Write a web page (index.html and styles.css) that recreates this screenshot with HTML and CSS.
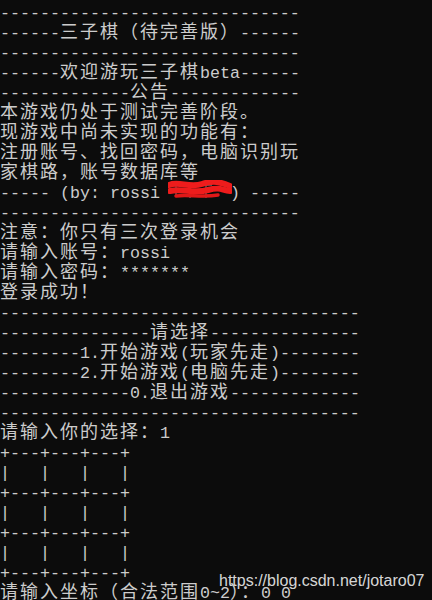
FILE: index.html
```html
<!DOCTYPE html>
<html lang="zh-CN">
<head>
<meta charset="utf-8">
<title>三子棋</title>
<link rel="stylesheet" href="styles.css">
</head>
<body>
<div class="console">
<div class="ln"><span class="h">------------------------------</span></div>
<div class="ln"><span class="h">------</span>三子棋（待完善版）<span class="h">------</span></div>
<div class="ln"><span class="h">------------------------------</span></div>
<div class="ln"><span class="h">------</span>欢迎游玩三子棋<span class="h">beta------</span></div>
<div class="ln"><span class="h">-------------</span>公告<span class="h">-------------</span></div>
<div class="ln">本游戏仍处于测试完善阶段。</div>
<div class="ln">现游戏中尚未实现的功能有：</div>
<div class="ln">注册账号、找回密码，电脑识别玩</div>
<div class="ln">家棋路，账号数据库等</div>
<div class="ln"><span class="h">----- (by: rossi </span><span class="redact"><svg width="64" height="20" viewBox="0 0 64 20"><path d="M4 4 L12 4 M8 2 L8 17 M16 6 L24 6 M22 3 L22 18 M32 5 L44 5 M38 3 L38 18 M48 8 L58 8" stroke="#6a6a6a" stroke-width="1.3" fill="none"/><path d="M1 5 C10 1, 22 8, 34 4 S52 2, 62 6" stroke="#ee1c1c" stroke-width="6" fill="none" stroke-linecap="round"/><path d="M2 11 C14 8, 26 14, 40 10 S54 11, 62 11" stroke="#ee1c1c" stroke-width="6" fill="none" stroke-linecap="round"/><path d="M8 16 C20 14, 34 18, 50 15" stroke="#e01818" stroke-width="3.5" fill="none" stroke-linecap="round"/></svg></span><span class="h">) -----</span></div>
<div class="ln"><span class="h">------------------------------</span></div>
<div class="ln">注意：你只有三次登录机会</div>
<div class="ln">请输入账号：<span class="h">rossi</span></div>
<div class="ln">请输入密码：<span class="h">*******</span></div>
<div class="ln">登录成功！</div>
<div class="ln"><span class="h">------------------------------------</span></div>
<div class="ln"><span class="h">---------------</span>请选择<span class="h">---------------</span></div>
<div class="ln"><span class="h">--------1.</span>开始游戏<span class="h">(</span>玩家先走<span class="h">)--------</span></div>
<div class="ln"><span class="h">--------2.</span>开始游戏<span class="h">(</span>电脑先走<span class="h">)--------</span></div>
<div class="ln"><span class="h">-------------0.</span>退出游戏<span class="h">-------------</span></div>
<div class="ln"><span class="h">------------------------------------</span></div>
<div class="ln">请输入你的选择：<span class="h">1</span></div>
<div class="ln"><span class="h">+---+---+---+</span></div>
<div class="ln"><span class="h">|   |   |   |</span></div>
<div class="ln"><span class="h">+---+---+---+</span></div>
<div class="ln"><span class="h">|   |   |   |</span></div>
<div class="ln"><span class="h">+---+---+---+</span></div>
<div class="ln"><span class="h">|   |   |   |</span></div>
<div class="ln"><span class="h">+---+---+---+</span></div>
<div class="ln">请输入坐标（合法范围<span class="h">0~2</span>）：<span class="h">0 0</span></div>
<span class="watermark">https://blog.csdn.net/jotaro07</span>
</div>
</body>
</html>
```

FILE: styles.css
```css
html, body {
  margin: 0;
  padding: 0;
  background: #0c0c0c;
}

.console {
  position: relative;
  height: 600px;
  overflow: hidden;
  font-family: "Noto Sans CJK SC", sans-serif;
  font-size: 18px;
  letter-spacing: 2px;
  line-height: 20px;
  color: #cccccc;
}

.ln {
  height: 20px;
  white-space: pre;
}

.h {
  font-family: "Liberation Mono", monospace;
  font-size: 16.667px;
  letter-spacing: 0;
  line-height: 20px;
}

.redact {
  display: inline-block;
  width: 60px;
  height: 20px;
  vertical-align: top;
}

.redact svg {
  display: block;
  margin-left: -2px;
}

.watermark {
  position: absolute;
  left: 219px;
  top: 573px;
  font-family: "Liberation Sans", Arial, sans-serif;
  font-size: 16px;
  line-height: 16px;
  letter-spacing: 0;
  white-space: nowrap;
  color: rgba(240, 240, 240, 0.9);
}
```
